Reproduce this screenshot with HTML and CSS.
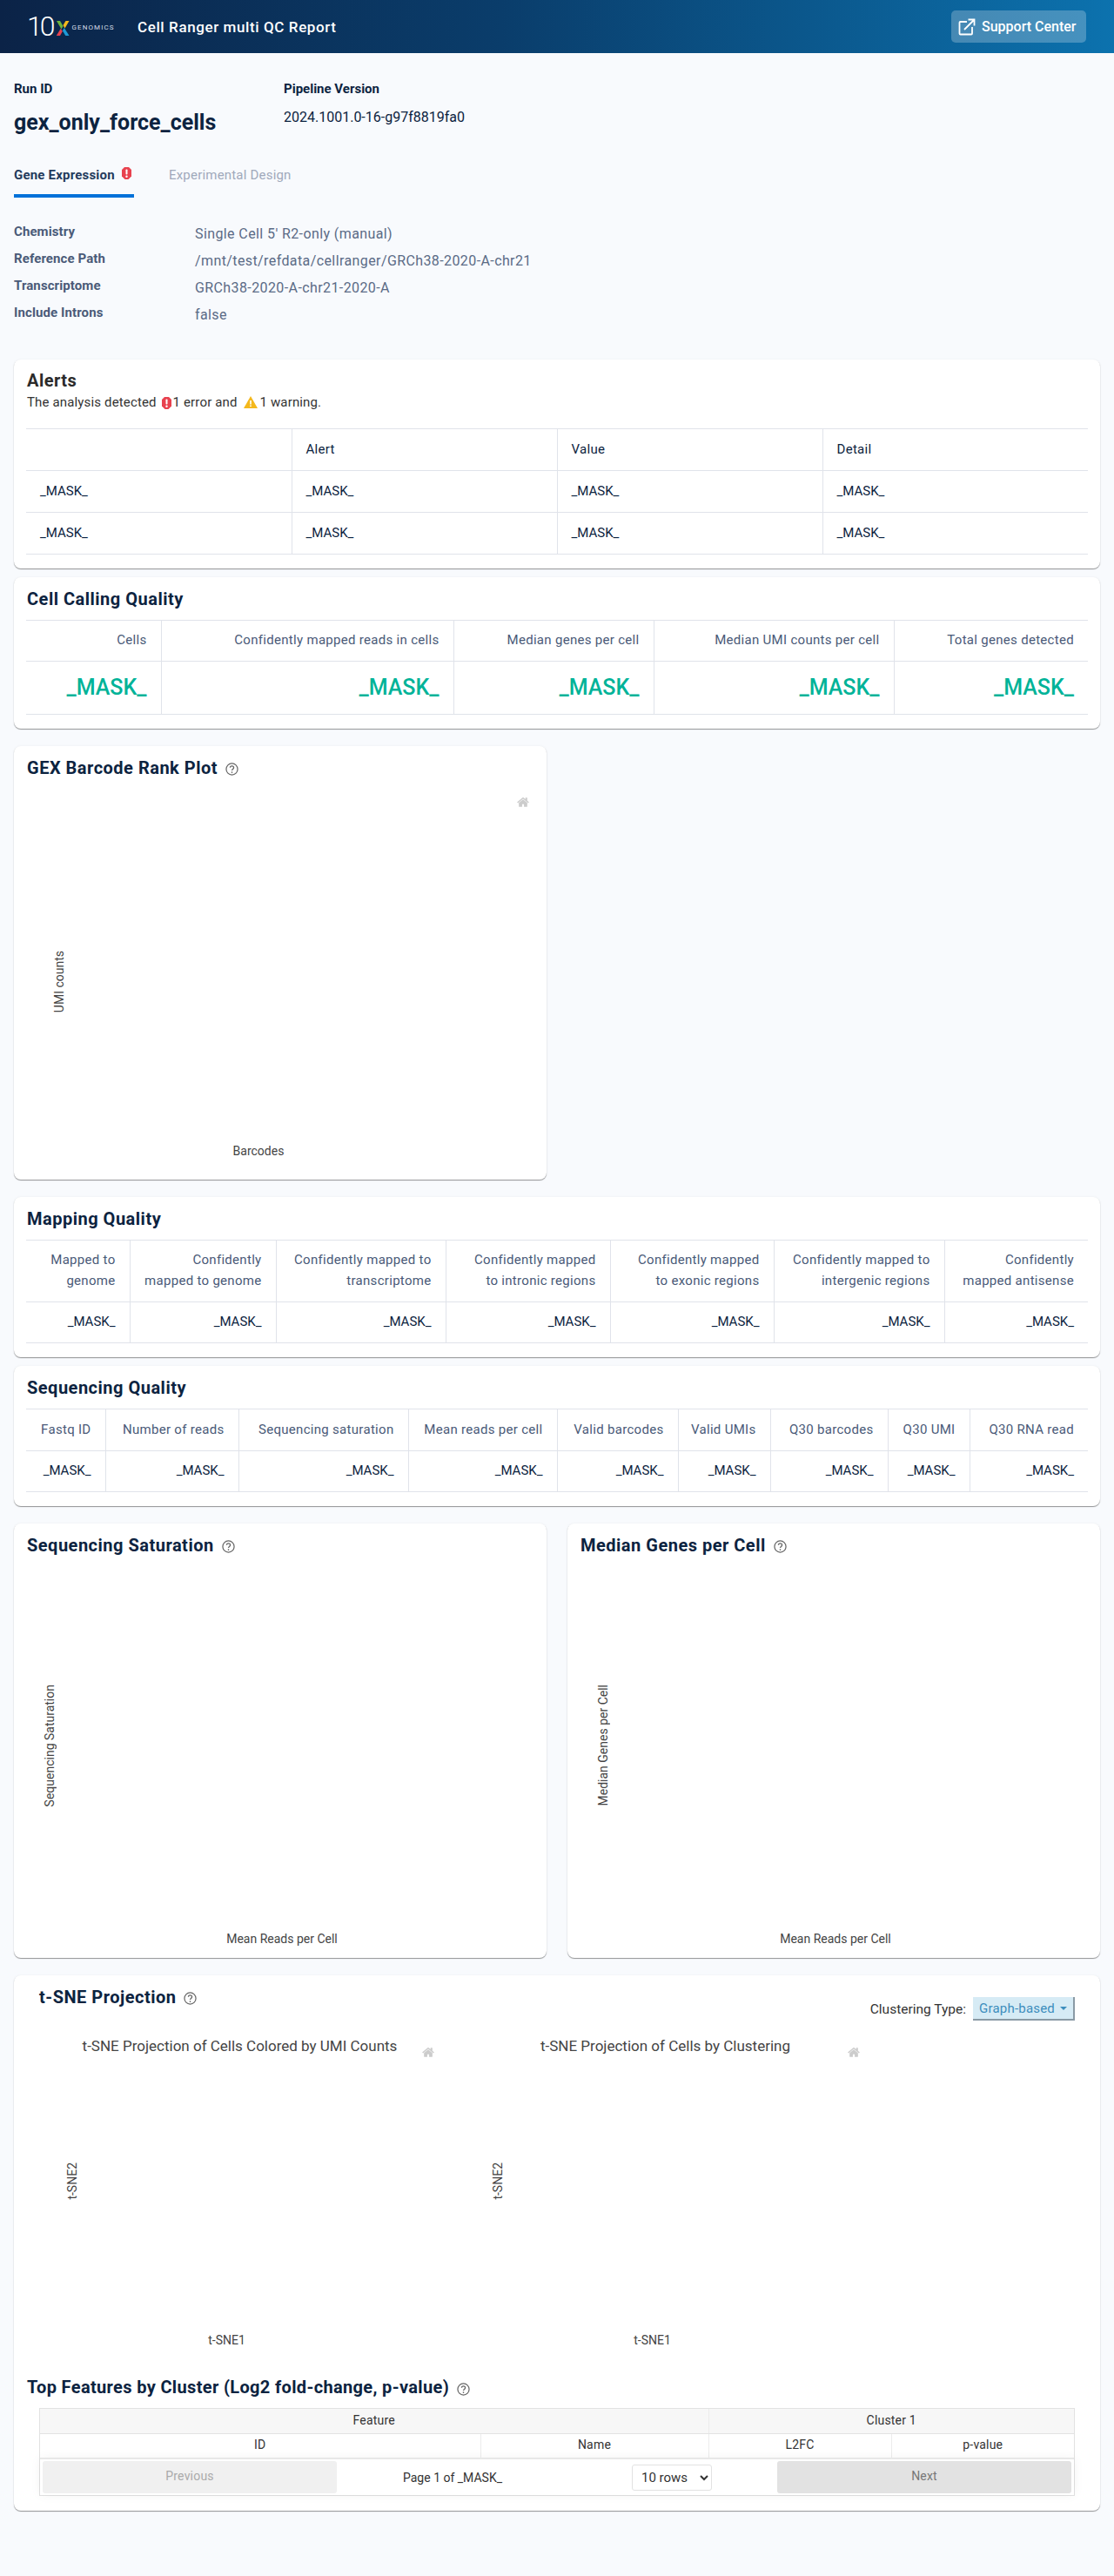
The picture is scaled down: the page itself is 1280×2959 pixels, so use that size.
FILE: index.html
```html
<!DOCTYPE html>
<html lang="en">

<head>
    <meta charset="utf-8">
    <meta name="viewport" content="width=device-width, initial-scale=1">
    <title>Cell Ranger multi QC Report</title>
    <link rel="stylesheet" href="styles.css">
</head>

<body>
    <svg class="sprites" width="0" height="0" aria-hidden="true">
        <symbol id="icon-home" viewBox="0 0 928.6 1000">
            <path transform="matrix(1 0 0 -1 0 850)" d="m786 296v-267q0-15-11-26t-25-10h-214v214h-143v-214h-214q-15 0-25 10t-11 26v267q0 1 0 2t0 2l321 264 321-264q1-1 1-4z m124 39l-34-41q-5-5-12-6h-2q-7 0-12 3l-386 322-386-322q-7-4-13-4-7 2-12 7l-35 41q-4 5-3 13t6 12l401 334q18 15 42 15t43-15l136-114v109q0 8 5 13t13 5h107q8 0 13-5t5-13v-227l122-102q5-5 6-12t-4-13z"/>
        </symbol>
        <symbol id="icon-help" viewBox="0 0 16 16">
            <circle cx="8" cy="8" r="7" fill="none" stroke="currentColor" stroke-width="1.300"/>
            <path d="M5.800 6.200c0-1.300 1-2.100 2.200-2.100s2.200.8 2.200 2c0 1.800-2.200 1.800-2.200 3.600" fill="none" stroke="currentColor" stroke-width="1.400"/>
            <circle cx="8" cy="11.800" r=".9" fill="currentColor"/>
        </symbol>
        <symbol id="icon-error" viewBox="0 0 11 14">
            <path d="M3 0h5l3 3v7.500l-3.500 3.500h-4l-3.500-3.500v-7.500z" fill="#e8424f"/>
            <rect x="4.500" y="2.500" width="2" height="6" rx=".8" fill="#fff"/>
            <circle cx="5.500" cy="10.700" r="1.200" fill="#fff"/>
        </symbol>
    </svg>

    <header class="topbar">
        <div class="logo">
            <span class="logo-ten">10</span>
            <svg class="logo-x" viewBox="0 0 16 17" width="16" height="17">
                <path d="M1 0h4l3.500 6-2 3.400z" fill="#6cb33f"/>
                <path d="M15.500 0h-4l-3 5 2 3.400z" fill="#f4b81c"/>
                <path d="M5.800 8.700l2 3.400-2.800 4.900h-4.200z" fill="#e8424f"/>
                <path d="M9.800 8l5.700 9h-4.200l-3.500-5.800z" fill="#1d9ad6"/>
            </svg>
            <span class="logo-name">GENOMICS</span>
        </div>
        <h1 class="report-title">Cell Ranger multi QC Report</h1>
        <a class="support-btn" href="#">
            <svg viewBox="0 0 20 20" width="20" height="20" fill="none" stroke="#fff" stroke-width="1.800">
                <path d="M10 4H2.500a1 1 0 0 0-1 1v12.500a1 1 0 0 0 1 1h12.500a1 1 0 0 0 1-1V10"/>
                <path d="M7 13L18 2M11.500 1.500h7v7"/>
            </svg>
            Support Center
        </a>
    </header>

    <main class="content">
        <section class="run-info">
            <div class="run-col">
                <div class="run-label">Run ID</div>
                <div class="run-id">gex_only_force_cells</div>
            </div>
            <div>
                <div class="run-label">Pipeline Version</div>
                <div class="run-version">2024.1001.0-16-g97f8819fa0</div>
            </div>
        </section>

        <nav class="tabs">
            <a class="tab tab-active" href="#">Gene Expression <svg class="tab-alert" width="11" height="14"><use href="#icon-error"/></svg></a>
            <a class="tab" href="#">Experimental Design</a>
        </nav>

        <dl class="details">
            <dt>Chemistry</dt>
            <dd>Single Cell 5' R2-only (manual)</dd>
            <dt>Reference Path</dt>
            <dd>/mnt/test/refdata/cellranger/GRCh38-2020-A-chr21</dd>
            <dt>Transcriptome</dt>
            <dd>GRCh38-2020-A-chr21-2020-A</dd>
            <dt>Include Introns</dt>
            <dd>false</dd>
        </dl>

        <section class="card card-alerts">
            <h2 class="card-title title-alerts">Alerts</h2>
            <p class="alert-summary">The analysis detected
                <svg class="alert-icon" width="11" height="14"><use href="#icon-error"/></svg>1 error and
                <svg class="warn-icon" viewBox="0 0 16 14" width="16" height="14">
                    <path d="M8 0l8 14H0z" fill="#f4b81c"/>
                    <rect x="7.200" y="5" width="1.600" height="4.500" fill="#fff"/>
                    <rect x="7.200" y="10.500" width="1.600" height="1.600" fill="#fff"/>
                </svg>1 warning.</p>
            <table class="data-table table-alerts">
                <colgroup><col><col><col><col></colgroup>
                <thead>
                    <tr><th></th><th>Alert</th><th>Value</th><th>Detail</th></tr>
                </thead>
                <tbody>
                    <tr><td>_MASK_</td><td>_MASK_</td><td>_MASK_</td><td>_MASK_</td></tr>
                    <tr><td>_MASK_</td><td>_MASK_</td><td>_MASK_</td><td>_MASK_</td></tr>
                </tbody>
            </table>
        </section>

        <section class="card card-close">
            <h2 class="card-title">Cell Calling Quality</h2>
            <table class="data-table metric-table table-cells">
                <colgroup><col><col><col><col><col></colgroup>
                <thead>
                    <tr>
                        <th>Cells</th>
                        <th>Confidently mapped reads in cells</th>
                        <th>Median genes per cell</th>
                        <th>Median UMI counts per cell</th>
                        <th>Total genes detected</th>
                    </tr>
                </thead>
                <tbody>
                    <tr><td>_MASK_</td><td>_MASK_</td><td>_MASK_</td><td>_MASK_</td><td>_MASK_</td></tr>
                </tbody>
            </table>
        </section>

        <section class="card plot-card-rank">
            <h2 class="card-title">GEX Barcode Rank Plot <svg class="help" width="15" height="15"><use href="#icon-help"/></svg></h2>
            <div class="plot plot-rank">
                <span class="axis-y">UMI counts</span>
                <span class="axis-x">Barcodes</span>
                <svg class="plot-home" width="14" height="15"><use href="#icon-home"/></svg>
            </div>
        </section>

        <section class="card">
            <h2 class="card-title">Mapping Quality</h2>
            <table class="data-table metric-table-small table-mapping">
                <colgroup><col><col><col><col><col><col><col></colgroup>
                <thead>
                    <tr>
                        <th>Mapped to<br>genome</th>
                        <th>Confidently<br>mapped to genome</th>
                        <th>Confidently mapped to<br>transcriptome</th>
                        <th>Confidently mapped<br>to intronic regions</th>
                        <th>Confidently mapped<br>to exonic regions</th>
                        <th>Confidently mapped to<br>intergenic regions</th>
                        <th>Confidently<br>mapped antisense</th>
                    </tr>
                </thead>
                <tbody>
                    <tr><td>_MASK_</td><td>_MASK_</td><td>_MASK_</td><td>_MASK_</td><td>_MASK_</td><td>_MASK_</td><td>_MASK_</td></tr>
                </tbody>
            </table>
        </section>

        <section class="card card-close">
            <h2 class="card-title">Sequencing Quality</h2>
            <table class="data-table metric-table-small table-sequencing">
                <colgroup><col><col><col><col><col><col><col><col><col></colgroup>
                <thead>
                    <tr>
                        <th>Fastq ID</th>
                        <th>Number of reads</th>
                        <th>Sequencing saturation</th>
                        <th>Mean reads per cell</th>
                        <th>Valid barcodes</th>
                        <th>Valid UMIs</th>
                        <th>Q30 barcodes</th>
                        <th>Q30 UMI</th>
                        <th>Q30 RNA read</th>
                    </tr>
                </thead>
                <tbody>
                    <tr><td>_MASK_</td><td>_MASK_</td><td>_MASK_</td><td>_MASK_</td><td>_MASK_</td><td>_MASK_</td><td>_MASK_</td><td>_MASK_</td><td>_MASK_</td></tr>
                </tbody>
            </table>
        </section>

        <div class="card-row">
            <section class="card card-half">
                <h2 class="card-title">Sequencing Saturation <svg class="help" width="15" height="15"><use href="#icon-help"/></svg></h2>
                <div class="plot plot-saturation">
                    <span class="axis-y">Sequencing Saturation</span>
                    <span class="axis-x">Mean Reads per Cell</span>
                </div>
            </section>
            <section class="card card-half">
                <h2 class="card-title">Median Genes per Cell <svg class="help" width="15" height="15"><use href="#icon-help"/></svg></h2>
                <div class="plot plot-genes">
                    <span class="axis-y">Median Genes per Cell</span>
                    <span class="axis-x">Mean Reads per Cell</span>
                </div>
            </section>
        </div>

        <section class="card card-tsne">
            <div class="tsne-head">
                <h2 class="card-title">t-SNE Projection <svg class="help" width="15" height="15"><use href="#icon-help"/></svg></h2>
                <div class="cluster-type">
                    <span>Clustering Type:</span>
                    <button class="dropdown-btn" type="button">Graph-based <i class="caret"></i></button>
                </div>
            </div>
            <div class="tsne-plots">
                <div class="plot plot-tsne">
                    <h3 class="plot-title">t-SNE Projection of Cells Colored by UMI Counts</h3>
                    <span class="axis-y">t-SNE2</span>
                    <span class="axis-x">t-SNE1</span>
                    <svg class="plot-home" width="14" height="15"><use href="#icon-home"/></svg>
                </div>
                <div class="plot plot-tsne">
                    <h3 class="plot-title">t-SNE Projection of Cells by Clustering</h3>
                    <span class="axis-y">t-SNE2</span>
                    <span class="axis-x">t-SNE1</span>
                    <svg class="plot-home" width="14" height="15"><use href="#icon-home"/></svg>
                </div>
            </div>
            <h2 class="card-title title-features">Top Features by Cluster (Log2 fold-change, p-value) <svg class="help" width="15" height="15"><use href="#icon-help"/></svg></h2>
            <div class="react-table">
                <table class="features-table">
                    <colgroup><col><col><col><col></colgroup>
                    <thead>
                        <tr class="group-row"><th colspan="2">Feature</th><th colspan="2">Cluster 1</th></tr>
                        <tr><th>ID</th><th>Name</th><th>L2FC</th><th>p-value</th></tr>
                    </thead>
                </table>
                <div class="pagination">
                    <button class="page-btn" type="button" disabled>Previous</button>
                    <div class="page-center">
                        <span class="page-info">Page 1 of _MASK_</span>
                        <select class="page-size">
                            <option>10 rows</option>
                            <option>25 rows</option>
                            <option>50 rows</option>
                        </select>
                    </div>
                    <button class="page-btn page-next" type="button">Next</button>
                </div>
            </div>
        </section>
    </main>
</body>

</html>
```

FILE: styles.css
```css
html {
    box-sizing: border-box;
}

*,
*:before,
*:after {
    box-sizing: inherit;
}

body {
    background: #f8fafd;
    color: #0c2340;
    font-family: Roboto, "Liberation Sans", sans-serif;
    font-size: 15px;
    margin: 0;
}

.sprites {
    position: absolute;
}

/* top bar */
.topbar {
    align-items: center;
    background: linear-gradient(90deg, #0b2347 0%, #0a3d6b 45%, #0c72ae 100%);
    color: #fff;
    display: flex;
    height: 61px;
    padding: 0 32px;
}

.logo {
    align-items: center;
    display: flex;
    width: 126px;
}

.logo-ten {
    font-size: 32px;
    font-weight: 300;
    letter-spacing: -3px;
    line-height: 33px;
    margin-left: -1px;
}

.logo-x {
    margin: 3px 0 0 3px;
}

.logo-name {
    color: #d5dde6;
    font-size: 8px;
    letter-spacing: 1.100px;
    margin: 2px 0 0 3px;
}

.report-title {
    font-size: 17px;
    font-weight: 500;
    letter-spacing: .6px;
    margin: 0;
}

.support-btn {
    align-items: center;
    background: rgba(255, 255, 255, .24);
    border-radius: 5px;
    color: #fff;
    display: flex;
    font-size: 16px;
    font-weight: 500;
    gap: 7px;
    height: 37px;
    margin-left: auto;
    padding: 0 8px;
    text-decoration: none;
    width: 155px;
}

/* run header */
.content {
    padding: 0 16px 74px;
}

.run-info {
    display: flex;
    padding-top: 31px;
}

.run-col {
    width: 310px;
}

.run-label {
    font-size: 15px;
    font-weight: 700;
    line-height: 20px;
}

.run-id {
    font-size: 25px;
    font-weight: 700;
    line-height: 36px;
    margin-top: 11px;
}

.run-version {
    font-size: 16px;
    line-height: 24px;
    margin-top: 11px;
}

.tabs {
    display: flex;
    gap: 40px;
    margin-top: 24px;
}

.tab {
    color: #a0a9bb;
    font-size: 15px;
    letter-spacing: .2px;
    line-height: 20px;
    padding: 8px 0 12px;
    text-decoration: none;
    white-space: nowrap;
}

.tab-active {
    border-bottom: 4px solid #0071d9;
    color: #243b5c;
    font-weight: 700;
    width: 138px;
}

.tab-alert {
    margin-left: 4px;
    vertical-align: 0;
}

.details {
    display: grid;
    gap: 0;
    grid-template-columns: 208px 1fr;
    grid-auto-rows: 31px;
    line-height: 31px;
    margin: 24px 0 38px;
}

.details dt {
    color: #4a5a78;
    font-weight: 700;
    letter-spacing: .1px;
}

.details dd {
    color: #5b6b86;
    font-size: 16px;
    letter-spacing: .4px;
    margin: 2px 0 0;
}

/* cards */
.card {
    background: #fff;
    border-radius: 8px;
    box-shadow: 0 1px 1px rgba(0, 0, 0, .4), 0 0 3px rgba(0, 0, 0, .05);
    margin-top: 20px;
    padding: 0 14px 16px;
}

.card-close {
    margin-top: 10px;
}

.card-half {
    flex: 0 0 612px;
    padding-bottom: 12px;
}

.plot-card-rank {
    width: 612px;
}

.card-row {
    display: flex;
    gap: 24px;
}

.card-title {
    align-items: center;
    display: flex;
    font-size: 20px;
    font-weight: 700;
    gap: 9px;
    height: 49px;
    letter-spacing: .5px;
    line-height: 24px;
    margin: 0;
    padding-left: 1px;
}

.title-alerts {
    color: #2b2b2b;
    height: 39px;
    padding-top: 9px;
}

.alert-summary {
    color: #333;
    font-size: 15px;
    letter-spacing: .15px;
    line-height: 20px;
    margin: 0 0 20px 1px;
}

.alert-icon {
    margin: 0 2px;
    vertical-align: -3px;
}

.warn-icon {
    margin: 0 2px 0 4px;
    vertical-align: -2px;
}

.help {
    color: #666;
    margin-top: 4px;
}

/* tables */
.data-table {
    border-collapse: collapse;
    table-layout: fixed;
    width: 1220px;
}

.data-table th,
.data-table td {
    border: 1px solid #e0e3ea;
    font-weight: 400;
    height: 48px;
    padding: 0 16px 2px;
    text-align: left;
}

.data-table th {
    letter-spacing: .3px;
}

.data-table tr > :first-child {
    border-left: 0;
}

.data-table tr > :last-child {
    border-right: 0;
}

.metric-table th,
.metric-table td,
.metric-table-small th,
.metric-table-small td {
    text-align: right;
}

.metric-table th,
.metric-table-small th {
    color: #4a5a78;
}

.metric-table th {
    height: 47px;
}

.metric-table td {
    color: #00b398;
    font-size: 25px;
    font-weight: 500;
    height: 61px;
}

.metric-table-small th {
    line-height: 24px;
    padding: 0 16px 2px 8px;
    white-space: nowrap;
}

.table-mapping th {
    height: 71px;
}

.table-mapping td,
.table-sequencing td {
    height: 47px;
}

.table-sequencing th {
    height: 48px;
}

.table-alerts col {
    width: 305px;
}

.table-cells col:nth-child(1) { width: 155px; }
.table-cells col:nth-child(2) { width: 336px; }
.table-cells col:nth-child(3) { width: 230px; }
.table-cells col:nth-child(4) { width: 276px; }
.table-cells col:nth-child(5) { width: 223px; }

.table-mapping col:nth-child(1) { width: 119px; }
.table-mapping col:nth-child(2) { width: 168px; }
.table-mapping col:nth-child(3) { width: 195px; }
.table-mapping col:nth-child(4) { width: 189px; }
.table-mapping col:nth-child(5) { width: 188px; }
.table-mapping col:nth-child(6) { width: 196px; }
.table-mapping col:nth-child(7) { width: 165px; }

.table-sequencing col:nth-child(1) { width: 91px; }
.table-sequencing col:nth-child(2) { width: 153px; }
.table-sequencing col:nth-child(3) { width: 195px; }
.table-sequencing col:nth-child(4) { width: 171px; }
.table-sequencing col:nth-child(5) { width: 139px; }
.table-sequencing col:nth-child(6) { width: 106px; }
.table-sequencing col:nth-child(7) { width: 135px; }
.table-sequencing col:nth-child(8) { width: 94px; }
.table-sequencing col:nth-child(9) { width: 136px; }

/* plots */
.plot {
    color: #444;
    display: grid;
    font-size: 14px;
    grid-template-rows: 1fr 20px;
    position: relative;
}

.axis-y {
    align-self: center;
    grid-column: 1;
    grid-row: 1;
    justify-self: center;
    transform: rotate(180deg);
    writing-mode: vertical-rl;
}

.axis-x {
    grid-column: 2;
    grid-row: 2;
    justify-self: center;
    line-height: 20px;
}

.plot-home {
    color: #ccc;
    fill: currentColor;
    position: absolute;
}

.plot-rank {
    grid-template-columns: 16px 1fr;
    height: 388px;
    margin: 38px 0 7px 30px;
    padding-right: 96px;
}

.plot-rank .plot-home {
    right: 6px;
    top: -30px;
}

.plot-saturation,
.plot-genes {
    height: 438px;
}

.plot-saturation .axis-y,
.plot-genes .axis-y {
    margin-bottom: 6px;
}

.plot-saturation {
    grid-template-columns: 12px 1fr;
    margin-left: 21px;
    padding-right: 29px;
}

.plot-genes {
    grid-template-columns: 14px 1fr;
    margin-left: 20px;
    padding-right: 30px;
}

.card-tsne {
    padding-bottom: 17px;
}

.tsne-head {
    display: flex;
    justify-content: space-between;
}

.tsne-head .card-title {
    padding-left: 15px;
}

.cluster-type {
    align-items: center;
    color: #333;
    display: flex;
    font-size: 15.500px;
    gap: 8px;
    margin: 25px 15px 0 0;
    height: 27px;
}

.dropdown-btn {
    background: #d6ebf5;
    border: 0;
    border-bottom: 2px solid #8a9aa5;
    border-right: 2px solid #8a9aa5;
    color: #3d8ebd;
    font-family: inherit;
    font-size: 15px;
    height: 27px;
    letter-spacing: .2px;
    padding: 0 6px;
    white-space: nowrap;
    width: 117px;
}

.caret {
    border-left: 4px solid transparent;
    border-right: 4px solid transparent;
    border-top: 4px solid #3d8ebd;
    display: inline-block;
    margin-left: 2px;
    vertical-align: 3px;
}

.tsne-plots {
    display: grid;
    grid-template-columns: 489px 489px;
    margin-top: 17px;
}

.plot-tsne {
    grid-template-columns: 14px minmax(0, 1fr);
    grid-template-rows: 32px 1fr 20px;
    height: 360px;
    padding: 0 88px 0 46px;
}

.plot-tsne .axis-y {
    grid-row: 2;
    margin-bottom: 38px;
}

.plot-tsne .axis-x {
    grid-row: 3;
}

.plot-tsne .plot-home {
    right: 20px;
    top: 12px;
}

.plot-title {
    font-size: 17px;
    font-weight: 400;
    grid-column: 2;
    grid-row: 1;
    justify-self: center;
    line-height: 24px;
    margin: 0 0 0 30px;
    white-space: nowrap;
}

.title-features {
    height: 32px;
    letter-spacing: .35px;
    margin-top: 28px;
}

/* feature table */
.react-table {
    border: 1px solid #e2e2e2;
    margin: 8px 15px 0;
}

.features-table {
    border-collapse: collapse;
    table-layout: fixed;
    width: 100%;
}

.features-table col:nth-child(1) { width: 506px; }
.features-table col:nth-child(2) { width: 262px; }
.features-table col:nth-child(3) { width: 210px; }
.features-table col:nth-child(4) { width: 210px; }

.features-table th {
    border-left: 1px solid #ececec;
    color: #333;
    font-size: 14px;
    font-weight: 400;
    height: 28px;
    letter-spacing: .2px;
    padding: 0 0 2px;
}

.features-table th:first-child {
    border-left: 0;
}

.group-row th {
    background: #f7f7f7;
    border-bottom: 1px solid #e2e2e2;
}

.pagination {
    border-top: 2px solid #e8e8e8;
    box-shadow: 0 0 12px rgba(0, 0, 0, .05);
    display: grid;
    grid-template-columns: 338px 1fr 338px;
    padding: 2px 3px;
}

.page-btn {
    background: #f0f0f0;
    border: 0;
    border-radius: 3px;
    color: #aaa;
    font-family: inherit;
    font-size: 14px;
    height: 37px;
    letter-spacing: .2px;
    padding: 0 0 4px;
}

.page-next {
    background: #e2e2e2;
    color: #777;
}

.page-center {
    align-items: center;
    color: #333;
    display: flex;
    font-size: 14px;
    padding-left: 76px;
}

.page-size {
    background: #fff;
    border: 1px solid #e2e2e2;
    border-radius: 3px;
    color: #333;
    font-family: inherit;
    font-size: 15px;
    height: 30px;
    margin-left: 149px;
    padding: 0 6px;
    width: 92px;
}
```
